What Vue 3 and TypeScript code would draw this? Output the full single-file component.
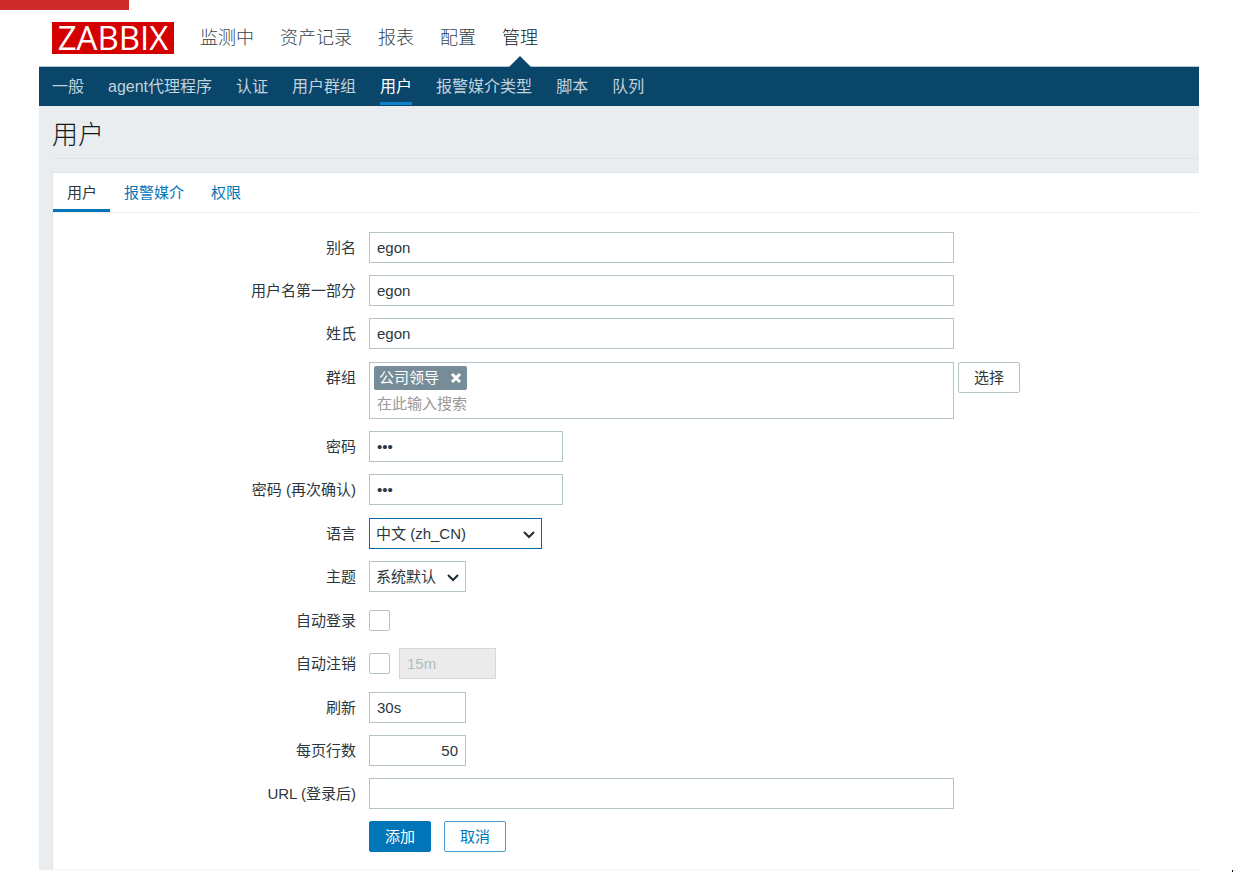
<script setup lang="ts">
import { ref } from 'vue'

interface MenuItem {
  label: string
  active?: boolean
}

const mainMenu: MenuItem[] = [
  { label: '监测中' },
  { label: '资产记录' },
  { label: '报表' },
  { label: '配置' },
  { label: '管理', active: true },
]

const subMenu: MenuItem[] = [
  { label: '一般' },
  { label: 'agent代理程序' },
  { label: '认证' },
  { label: '用户群组' },
  { label: '用户', active: true },
  { label: '报警媒介类型' },
  { label: '脚本' },
  { label: '队列' },
]

const tabs: MenuItem[] = [
  { label: '用户', active: true },
  { label: '报警媒介' },
  { label: '权限' },
]

const alias = ref('egon')
const name = ref('egon')
const surname = ref('egon')
const groups = ref<string[]>(['公司领导'])
const groupSearch = ref('')
const password = ref('123')
const passwordRepeat = ref('123')
const language = ref('zh_CN')
const theme = ref('default')
const autoLogin = ref(false)
const autoLogout = ref(false)
const autoLogoutTime = ref('15m')
const refresh = ref('30s')
const rowsPerPage = ref('50')
const url = ref('')

function removeGroup(group: string) {
  groups.value = groups.value.filter((g) => g !== group)
}
</script>

<template>
  <div class="page">
    <div class="accent"></div>
    <div class="app">
      <header class="top">
        <a class="logo" href="#">ZABBIX</a>
        <nav class="main-menu">
          <a v-for="item in mainMenu" :key="item.label" href="#" :class="{ active: item.active }">{{ item.label }}</a>
        </nav>
      </header>
      <nav class="sub-menu">
        <a v-for="item in subMenu" :key="item.label" href="#" :class="{ active: item.active }">{{ item.label }}</a>
      </nav>
      <main class="content">
        <h1>用户</h1>
        <section class="panel">
          <nav class="tabs">
            <a v-for="tab in tabs" :key="tab.label" href="#" :class="{ active: tab.active }">{{ tab.label }}</a>
          </nav>
          <form class="form" @submit.prevent>
            <div class="group">
              <div class="row">
                <label for="alias">别名</label>
                <div class="field"><input id="alias" v-model="alias" class="wide" type="text" /></div>
              </div>
              <div class="row">
                <label for="name">用户名第一部分</label>
                <div class="field"><input id="name" v-model="name" class="wide" type="text" /></div>
              </div>
              <div class="row">
                <label for="surname">姓氏</label>
                <div class="field"><input id="surname" v-model="surname" class="wide" type="text" /></div>
              </div>
            </div>
            <div class="group">
              <div class="row">
                <label for="groups">群组</label>
                <div class="field top-aligned">
                  <div class="multiselect wide">
                    <span v-for="g in groups" :key="g" class="tag">
                      {{ g }}
                      <button type="button" aria-label="移除" @click="removeGroup(g)">
                        <svg width="12" height="12" viewBox="0 0 12 12"><path d="M2 2L10 10M10 2L2 10" /></svg>
                      </button>
                    </span>
                    <input id="groups" v-model="groupSearch" type="text" placeholder="在此输入搜索" />
                  </div>
                  <button type="button" class="btn btn-grey">选择</button>
                </div>
              </div>
              <div class="row">
                <label for="password">密码</label>
                <div class="field"><input id="password" v-model="password" class="medium" type="password" /></div>
              </div>
              <div class="row">
                <label for="password2">密码 (再次确认)</label>
                <div class="field"><input id="password2" v-model="passwordRepeat" class="medium" type="password" /></div>
              </div>
            </div>
            <div class="group">
              <div class="row">
                <label for="language">语言</label>
                <div class="field">
                  <div class="select language">
                    <select id="language" v-model="language">
                      <option value="zh_CN">中文 (zh_CN)</option>
                    </select>
                    <svg width="12" height="8" viewBox="0 0 12 8"><path d="M1 1L6 6L11 1" /></svg>
                  </div>
                </div>
              </div>
              <div class="row">
                <label for="theme">主题</label>
                <div class="field">
                  <div class="select theme">
                    <select id="theme" v-model="theme">
                      <option value="default">系统默认</option>
                    </select>
                    <svg width="12" height="8" viewBox="0 0 12 8"><path d="M1 1L6 6L11 1" /></svg>
                  </div>
                </div>
              </div>
            </div>
            <div class="group">
              <div class="row">
                <label for="autologin">自动登录</label>
                <div class="field"><input id="autologin" v-model="autoLogin" type="checkbox" /></div>
              </div>
              <div class="row">
                <label for="autologout">自动注销</label>
                <div class="field">
                  <input id="autologout" v-model="autoLogout" type="checkbox" />
                  <input v-model="autoLogoutTime" class="small" type="text" aria-label="自动注销时间" :disabled="!autoLogout" />
                </div>
              </div>
            </div>
            <div class="group">
              <div class="row">
                <label for="refresh">刷新</label>
                <div class="field"><input id="refresh" v-model="refresh" class="small" type="text" /></div>
              </div>
              <div class="row">
                <label for="rows">每页行数</label>
                <div class="field"><input id="rows" v-model="rowsPerPage" class="small number" type="text" /></div>
              </div>
              <div class="row">
                <label for="url">URL (登录后)</label>
                <div class="field"><input id="url" v-model="url" class="wide" type="text" /></div>
              </div>
              <div class="row">
                <span></span>
                <div class="field actions">
                  <button type="submit" class="btn btn-primary">添加</button>
                  <button type="button" class="btn btn-outline">取消</button>
                </div>
              </div>
            </div>
          </form>
        </section>
      </main>
    </div>
    <div class="edge-mark"></div>
  </div>
</template>

<style>
body {
  margin: 0;
  background: #fff;
}
</style>

<style scoped>
.page,
.page * {
  box-sizing: border-box;
}

.page {
  font-family: 'Liberation Sans', 'Noto Sans CJK SC', sans-serif;
  font-size: 15px;
  line-height: 20px;
  color: #2b373d;
}

a {
  text-decoration: none;
}

.accent {
  width: 129px;
  height: 10px;
  background: #cc2a2a;
}

.app {
  margin: 0 34px 0 39px;
}

.top {
  display: flex;
  align-items: center;
  height: 57px;
  padding-left: 13px;
  border-bottom: 1px solid #b5c6d0;
}

.logo {
  width: 122px;
  height: 32px;
  background: #d40000;
  color: #fff;
  font-family: 'Open Sans', sans-serif;
  font-size: 33px;
  font-weight: 500;
  line-height: 32px;
  text-align: center;
}

.main-menu {
  display: flex;
  align-self: stretch;
  gap: 26px;
  margin-left: 26px;
}

.main-menu a {
  position: relative;
  font-size: 18px;
  line-height: 56px;
  font-weight: 300;
  color: #36434b;
}

.main-menu a.active {
  color: #10191e;
}

.main-menu a.active::after {
  content: '';
  position: absolute;
  bottom: -1px;
  left: 50%;
  margin-left: -11px;
  border: 11px solid transparent;
  border-top: 0;
  border-bottom-color: #0a466a;
}

.sub-menu {
  display: flex;
  gap: 24px;
  height: 39px;
  padding: 0 13px 1px;
  background: #0a466a;
}

.sub-menu a {
  font-size: 16px;
  line-height: 40px;
  color: #c3d3dd;
}

.sub-menu a.active {
  color: #fff;
  box-shadow: inset 0 -3px #0f84cd;
}

.content {
  padding-left: 13px;
  background: #e9edf0;
}

h1 {
  margin: 0 0 13px;
  height: 53px;
  border-bottom: 1px solid #dfe4e7;
  font-size: 26px;
  line-height: 58px;
  font-weight: 300;
  color: #10191e;
}

.panel {
  background: #fff;
  border: 1px solid #dfe4e7;
  border-right: 0;
  border-bottom-color: #f4f4f4;
}

.tabs {
  display: flex;
  height: 40px;
  border-bottom: 1px solid #f0f0f0;
}

.tabs a {
  height: 39px;
  padding: 0 13px 0 14px;
  line-height: 39px;
  color: #0275b8;
}

.tabs a.active {
  color: #2b373d;
  box-shadow: inset 0 -3px #0275b8;
}

.form {
  display: flex;
  flex-direction: column;
  gap: 13px;
  padding: 19px 0 17px;
}

.group {
  display: flex;
  flex-direction: column;
  gap: 12px;
}

.row {
  display: grid;
  grid-template-columns: 303px 1fr;
  gap: 13px;
}

.row > label {
  text-align: right;
  line-height: 31px;
}

.field {
  display: flex;
  align-items: center;
  gap: 9px;
  min-height: 31px;
}

.top-aligned {
  align-items: flex-start;
  gap: 4px;
}

.actions {
  gap: 13px;
}

input,
select,
button {
  font: inherit;
  color: #2b373d;
}

input {
  margin: 0;
  outline: 0;
}

input[type='text'],
input[type='password'] {
  height: 31px;
  padding: 0 7px;
  border: 1px solid #b5c3ca;
  border-radius: 0;
  background: #fff;
}

.wide {
  width: 585px;
}

.medium {
  width: 194px;
}

.small {
  width: 97px;
}

.number {
  text-align: right;
}

input[type='text']:disabled {
  background: #ebebeb;
  border-color: #cfd9de;
  color: #acbbc2;
}

input[type='checkbox'] {
  appearance: none;
  width: 21px;
  height: 21px;
  border: 1px solid #b5c3ca;
  border-radius: 2px;
  background: #fff;
}

input[type='checkbox']:checked {
  background: #0275b8;
}

.multiselect {
  display: flex;
  flex-wrap: wrap;
  padding: 3px 4px 2px;
  border: 1px solid #b5c3ca;
}

.tag {
  display: flex;
  align-items: center;
  gap: 11px;
  height: 24px;
  padding: 0 5px;
  border-radius: 2px;
  background: #768d99;
  color: #fff;
}

.tag button {
  display: flex;
  padding: 0;
  border: 0;
  background: none;
}

.tag svg {
  fill: none;
  stroke: #fff;
  stroke-width: 3;
}

.multiselect input[type='text'] {
  width: 100%;
  height: 26px;
  padding: 0 3px;
  border: 0;
}

input::placeholder {
  color: #999;
  opacity: 1;
}

.select {
  position: relative;
}

.language {
  width: 173px;
}

.theme {
  width: 97px;
}

.select select {
  display: block;
  appearance: none;
  width: 100%;
  height: 31px;
  padding: 0 6px;
  border: 1px solid #b5c3ca;
  border-radius: 0;
  background: #fff;
  outline: 0;
}

.language select {
  border-color: #0a6aa6;
}

.select svg {
  position: absolute;
  right: 7px;
  top: 13px;
  fill: none;
  stroke: #1f2c33;
  stroke-width: 2;
  pointer-events: none;
}

.btn {
  height: 31px;
  padding: 0 15px;
  border: 1px solid #0275b8;
  border-radius: 2px;
  background: #fff;
}

.btn-grey {
  border-color: #b5c3ca;
}

.btn-primary {
  background: #0275b8;
  color: #fff;
}

.btn-outline {
  border-color: #4a9bcf;
  color: #0275b8;
}

.edge-mark {
  width: 1px;
  height: 2px;
  margin-left: auto;
  background: #000;
}
</style>
